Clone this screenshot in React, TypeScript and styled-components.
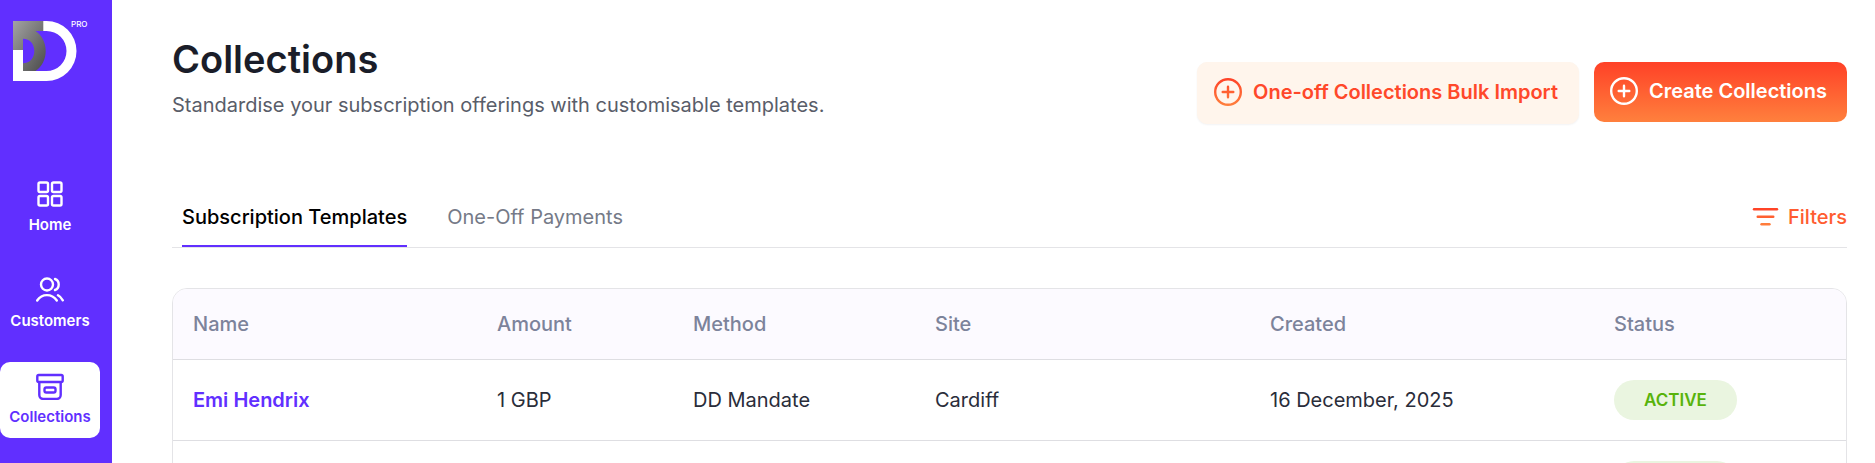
import React, { useState } from "react";
import styled, { createGlobalStyle } from "styled-components";

const colors = {
  brand: "#612fff",
  white: "#ffffff",
  title: "#1a1d29",
  body: "#2a2d3a",
  muted: "#595d69",
  tab: "#757a87",
  heading: "#7c839b",
  line: "#e4e4e7",
  headBg: "#fcfaff",
  orangeTop: "#ff4127",
  orangeBottom: "#ff803d",
  peach: "#fff5ec",
  green: "#58b30c",
  greenBg: "#eaf5e0",
};

const GlobalStyle = createGlobalStyle`
  * { box-sizing: border-box; }
  body {
    margin: 0;
    background: ${colors.white};
    font-family: Inter, "Liberation Sans", sans-serif;
    font-size: 20px;
    line-height: 24px;
    color: ${colors.body};
  }
  button { font: inherit; border: 0; cursor: pointer; }
`;

const Shell = styled.div`
  display: flex;
  height: 100vh;
  overflow: hidden;
`;

const Sidebar = styled.aside`
  flex: 0 0 112px;
  background: ${colors.brand};
`;

const LogoLink = styled.a`
  display: block;
  padding: 16px 0 0 8px;
  height: 170px;
`;

const LogoMark = styled.svg`
  display: block;
  font-family: Inter, sans-serif;
`;

const Nav = styled.nav`
  display: flex;
  flex-direction: column;
  gap: 20px;
  width: 100px;
`;

const NavItem = styled.a<{ $active?: boolean }>`
  display: flex;
  flex-direction: column;
  align-items: center;
  gap: 7px;
  padding: 10px 0 11px;
  border-radius: 10px;
  font-size: 15px;
  line-height: 20px;
  font-weight: 600;
  text-decoration: none;
  color: ${(p) => (p.$active ? colors.brand : colors.white)};
  background: ${(p) => (p.$active ? colors.white : "transparent")};
`;

const Main = styled.main`
  flex: 1;
  min-width: 0;
  padding: 36px 28px 0 60px;
  overflow: hidden;
`;

const Header = styled.header`
  display: flex;
  justify-content: space-between;
  align-items: flex-start;
`;

const Title = styled.h1`
  margin: 0;
  font-size: 38px;
  line-height: 46px;
  font-weight: 600;
  color: ${colors.title};
`;

const Subtitle = styled.p`
  margin: 11px 0 0;
  color: ${colors.muted};
`;

const Actions = styled.div`
  display: flex;
  align-items: flex-start;
  gap: 15px;
  padding-top: 26px;
`;

const ActionButton = styled.button<{ $primary?: boolean }>`
  display: flex;
  align-items: center;
  gap: 10px;
  height: ${(p) => (p.$primary ? "60px" : "62px")};
  padding: 0 20px 2px 15px;
  border: ${(p) => (p.$primary ? "0" : `1px solid ${colors.peach}`)};
  border-radius: 10px;
  font-weight: 600;
  white-space: nowrap;
  color: ${(p) => (p.$primary ? colors.white : "#ff482a")};
  background: ${(p) =>
    p.$primary
      ? `linear-gradient(${colors.orangeTop}, ${colors.orangeBottom})`
      : colors.peach};
  box-shadow: ${(p) => (p.$primary ? "none" : "0 1px 2px rgba(16, 24, 40, 0.05)")};
`;

const TabBar = styled.div`
  display: flex;
  justify-content: space-between;
  align-items: flex-start;
  margin-top: 73px;
  border-bottom: 1px solid ${colors.line};
`;

const Tabs = styled.div`
  display: flex;
  gap: 40px;
  padding-left: 10px;
`;

const Tab = styled.button<{ $active: boolean }>`
  padding: 8px 0 16px;
  background: none;
  line-height: 24px;
  font-weight: ${(p) => (p.$active ? 500 : 400)};
  color: ${(p) => (p.$active ? "#000000" : colors.tab)};
  border-bottom: 2px solid ${(p) => (p.$active ? colors.brand : "transparent")};
`;

const FilterButton = styled.button`
  display: flex;
  align-items: center;
  gap: 9px;
  padding: 8px 0;
  background: none;
  font-weight: 500;
  color: #ff5c30;
`;

const TableCard = styled.div`
  margin-top: 40px;
  border: 1px solid ${colors.line};
  border-radius: 15px;
  overflow: hidden;
`;

const Table = styled.table`
  width: 100%;
  table-layout: fixed;
  border-collapse: separate;
  border-spacing: 0;
  text-align: left;
`;

const Col = styled.col<{ $width: number }>`
  width: ${(p) => p.$width}px;
`;

const HeadCell = styled.th`
  height: 71px;
  padding: 0 20px;
  font-weight: 500;
  color: ${colors.heading};
  background: ${colors.headBg};
  border-bottom: 1px solid #dedee2;
`;

const Cell = styled.td`
  height: 81px;
  padding: 0 20px;
  border-bottom: 1px solid #dedee2;
`;

const NameLink = styled.a`
  font-weight: 600;
  color: ${colors.brand};
  text-decoration: none;
`;

const Badge = styled.span`
  display: inline-block;
  vertical-align: middle;
  padding: 0 30px;
  border-radius: 20px;
  font-size: 17px;
  line-height: 40px;
  font-weight: 600;
  color: ${colors.green};
  background: ${colors.greenBg};
`;

function Logo() {
  return (
    <LogoMark width="88" height="70" viewBox="8 16 88 70" role="img" aria-label="DD Pro">
      <defs>
        <linearGradient id="logoGrey" x1="0" y1="0" x2="1" y2="1">
          <stop offset="0" stopColor="#a3a3a3" />
          <stop offset="1" stopColor="#4a4a4a" />
        </linearGradient>
      </defs>
      <path
        fill="#fff"
        d="M43 21H46.5A30 30 0 0 1 46.5 81H13V50H23V71H46.5A20 20 0 0 0 46.5 31H43Z"
      />
      <path
        fill="url(#logoGrey)"
        d="M13 21H43.3V31H35.5C42 35 45.7 43 45.7 51S42 67 35.5 71H23V63.3C30 63.3 34.3 58 34.3 51S30 38.7 23 38.7V50H13Z"
      />
      <text x="71" y="27" fontSize="8" fontWeight="500" fill="#fff">
        PRO
      </text>
    </LogoMark>
  );
}

function HomeIcon() {
  return (
    <svg width="28" height="28" viewBox="0 0 28 28" fill="none" stroke="currentColor" strokeWidth="2.4">
      <rect x="2.5" y="2.5" width="9.5" height="9.5" rx="1.5" />
      <rect x="16" y="2.5" width="9.5" height="9.5" rx="1.5" />
      <rect x="2.5" y="16" width="9.5" height="9.5" rx="1.5" />
      <rect x="16" y="16" width="9.5" height="9.5" rx="1.5" />
    </svg>
  );
}

function CustomersIcon() {
  return (
    <svg width="28" height="28" viewBox="0 0 28 28" fill="none" stroke="currentColor" strokeWidth="2.4" strokeLinecap="round">
      <circle cx="11" cy="8.5" r="6" />
      <path d="M19 3c2.3.8 3.7 3 3.7 5.5s-1.4 4.7-3.7 5.5" />
      <path d="M1.2 24.5c4.8-7.2 14.6-7.2 19.600 0" />
      <path d="M22 19.3c1.9 1 3.5 2.7 4.8 5" />
    </svg>
  );
}

function CollectionsIcon() {
  return (
    <svg width="28" height="28" viewBox="0 0 28 28" fill="none" stroke="currentColor" strokeWidth="2.4" strokeLinejoin="round">
      <rect x="1.3" y="3" width="25.4" height="7" rx="1.5" />
      <path d="M3.3 10v13a4 4 0 0 0 4 4h13.4a4 4 0 0 0 4-4V10" />
      <rect x="8.5" y="15.5" width="11" height="5" rx="1.8" />
    </svg>
  );
}

function PlusCircle({ gradient }: { gradient?: boolean }) {
  return (
    <svg
      width="30"
      height="30"
      viewBox="0 0 30 30"
      fill="none"
      stroke={gradient ? "url(#plusOrange)" : "currentColor"}
      strokeWidth="2.4"
      strokeLinecap="round"
      strokeLinejoin="round"
    >
      {gradient && (
        <defs>
          <linearGradient id="plusOrange" gradientUnits="userSpaceOnUse" x1="0" y1="1" x2="0" y2="29">
            <stop stopColor={colors.orangeTop} />
            <stop offset="1" stopColor={colors.orangeBottom} />
          </linearGradient>
        </defs>
      )}
      <circle cx="15" cy="15" r="12.8" />
      <path d="M15 9.7v10.6M9.7 15h10.6" />
    </svg>
  );
}

function FilterIcon() {
  return (
    <svg width="28" height="24" viewBox="0 0 28 24" fill="none" strokeWidth="2.4" strokeLinecap="round">
      <path d="M3 4.2H26" stroke="#ff4427" />
      <path d="M6.7 11.7H22.3" stroke="#ff6030" />
      <path d="M10.5 19.2H18.5" stroke="#ff7c3b" />
    </svg>
  );
}

const navItems = [
  { label: "Home", Icon: HomeIcon },
  { label: "Customers", Icon: CustomersIcon },
  { label: "Collections", Icon: CollectionsIcon },
];

const tabs = ["Subscription Templates", "One-Off Payments"];

/* Relative widths: the fixed-layout table stretches them to its own width. */
const columns = [
  { label: "Name", width: 304 },
  { label: "Amount", width: 196 },
  { label: "Method", width: 242 },
  { label: "Site", width: 335 },
  { label: "Created", width: 344 },
  { label: "Status", width: 252 },
];

const rows = [
  { name: "Emi Hendrix", amount: "1 GBP", method: "DD Mandate", site: "Cardiff", created: "16 December, 2025", status: "ACTIVE" },
  { name: "", amount: "", method: "", site: "", created: "", status: "ACTIVE" },
];

export default function App() {
  const [tab, setTab] = useState(tabs[0]);
  return (
    <>
      <GlobalStyle />
      <Shell>
        <Sidebar>
          <LogoLink href="#home">
            <Logo />
          </LogoLink>
          <Nav aria-label="Main">
            {navItems.map(({ label, Icon }) => (
              <NavItem key={label} href={`#${label.toLowerCase()}`} $active={label === "Collections"}>
                <Icon />
                {label}
              </NavItem>
            ))}
          </Nav>
        </Sidebar>
        <Main>
          <Header>
            <div>
              <Title>Collections</Title>
              <Subtitle>Standardise your subscription offerings with customisable templates.</Subtitle>
            </div>
            <Actions>
              <ActionButton type="button">
                <PlusCircle gradient />
                One-off Collections Bulk Import
              </ActionButton>
              <ActionButton type="button" $primary>
                <PlusCircle />
                Create Collections
              </ActionButton>
            </Actions>
          </Header>
          <TabBar>
            <Tabs role="tablist">
              {tabs.map((name) => (
                <Tab
                  key={name}
                  type="button"
                  role="tab"
                  aria-selected={name === tab}
                  $active={name === tab}
                  onClick={() => setTab(name)}
                >
                  {name}
                </Tab>
              ))}
            </Tabs>
            <FilterButton type="button">
              <FilterIcon />
              Filters
            </FilterButton>
          </TabBar>
          <TableCard>
            <Table>
              <colgroup>
                {columns.map((c) => (
                  <Col key={c.label} $width={c.width} />
                ))}
              </colgroup>
              <thead>
                <tr>
                  {columns.map((c) => (
                    <HeadCell key={c.label} scope="col">
                      {c.label}
                    </HeadCell>
                  ))}
                </tr>
              </thead>
              <tbody>
                {rows.map((r, i) => (
                  <tr key={i}>
                    <Cell>{r.name && <NameLink href="#template">{r.name}</NameLink>}</Cell>
                    <Cell>{r.amount}</Cell>
                    <Cell>{r.method}</Cell>
                    <Cell>{r.site}</Cell>
                    <Cell>{r.created}</Cell>
                    <Cell>
                      <Badge>{r.status}</Badge>
                    </Cell>
                  </tr>
                ))}
              </tbody>
            </Table>
          </TableCard>
        </Main>
      </Shell>
    </>
  );
}
